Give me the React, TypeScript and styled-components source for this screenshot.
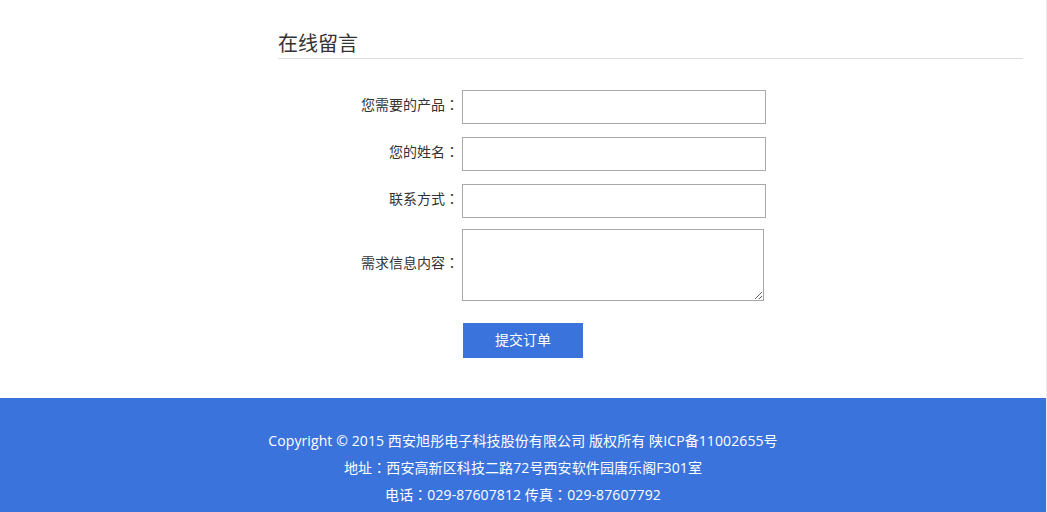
import React from "react";
import styled, { createGlobalStyle } from "styled-components";

const GlobalStyle = createGlobalStyle`
  html, body { margin: 0; padding: 0; background: #fff; }
  body {
    font-family: "Microsoft YaHei", "Noto Sans CJK SC", "Noto Sans", sans-serif;
    color: #333;
  }
`;

const Page = styled.div`
  width: 1046px;
  border-right: 1px solid #ececec;
  min-height: 512px;
  display: flex;
  flex-direction: column;
`;

const Container = styled.div`
  width: 1000px;
  margin: 0 auto;
  display: flex;
`;

const Sidebar = styled.aside`
  width: 255px;
  flex: none;
`;

const Main = styled.main`
  width: 745px;
  padding-top: 28px;
  padding-bottom: 40px;
`;

const Title = styled.h2`
  margin: 0;
  font-size: 20px;
  font-weight: normal;
  line-height: 30px;
  color: #333;
  border-bottom: 1px solid #ddd;
`;

const Form = styled.form`
  margin-top: 31px;
  display: grid;
  grid-template-columns: 181px 304px;
  column-gap: 3px;
  align-items: center;
`;

const Colon = styled.span`
  font-family: "Noto Sans CJK TC", "Noto Sans CJK SC", sans-serif;
`;

const Label = styled.label<{ $gap?: number }>`
  text-align: right;
  font-size: 14px;
  color: #333;
  white-space: nowrap;
  margin-bottom: ${(p) => (p.$gap ?? 13) + 6}px;
`;

const Input = styled.input<{ $gap?: number }>`
  box-sizing: border-box;
  width: 304px;
  height: 34px;
  border: 1px solid #a9a9a9;
  padding: 0 6px;
  margin: 0 0 ${(p) => p.$gap ?? 13}px 0;
  font: inherit;
  font-size: 14px;
  outline: none;
`;

const TextArea = styled.textarea`
  box-sizing: border-box;
  width: 302px;
  height: 72px;
  border: 1px solid #a9a9a9;
  padding: 4px 6px;
  margin: 0 0 22px 0;
  font: inherit;
  font-size: 14px;
  outline: none;
  display: block;
`;

const Submit = styled.button`
  grid-column: 2;
  justify-self: start;
  margin-left: 1px;
  width: 120px;
  height: 35px;
  padding: 0 0 3px;
  border: none;
  background: #3b73dc;
  color: #fff;
  font: inherit;
  font-size: 14px;
  cursor: pointer;
`;

const Footer = styled.footer`
  background: #3b73dc;
  color: #fff;
  text-align: center;
  font-family: "Open Sans", "Noto Sans CJK SC", sans-serif;
  font-size: 14px;
  letter-spacing: 0.1px;
  line-height: 26px;
  padding: 30px 0 30px;
  flex: 1;
`;

const Line = styled.p`
  margin: 0;
`;

export default function App() {
  return (
    <>
      <GlobalStyle />
      <Page>
        <Container>
          <Sidebar />
          <Main>
            <Title>在线留言</Title>
            <Form onSubmit={(e) => e.preventDefault()}>
              <Label>您需要的产品<Colon>：</Colon></Label>
              <Input type="text" />
              <Label>您的姓名<Colon>：</Colon></Label>
              <Input type="text" />
              <Label $gap={11}>联系方式<Colon>：</Colon></Label>
              <Input type="text" $gap={11} />
              <Label $gap={22}>需求信息内容<Colon>：</Colon></Label>
              <TextArea />
              <Submit type="submit">提交订单</Submit>
            </Form>
          </Main>
        </Container>
        <Footer>
          <Line>Copyright © 2015 西安旭彤电子科技股份有限公司 版权所有 陕ICP备11002655号</Line>
          <Line>地址<Colon>：</Colon>西安高新区科技二路72号西安软件园唐乐阁F301室</Line>
          <Line>电话<Colon>：</Colon>029-87607812 传真<Colon>：</Colon>029-87607792</Line>
        </Footer>
      </Page>
    </>
  );
}
